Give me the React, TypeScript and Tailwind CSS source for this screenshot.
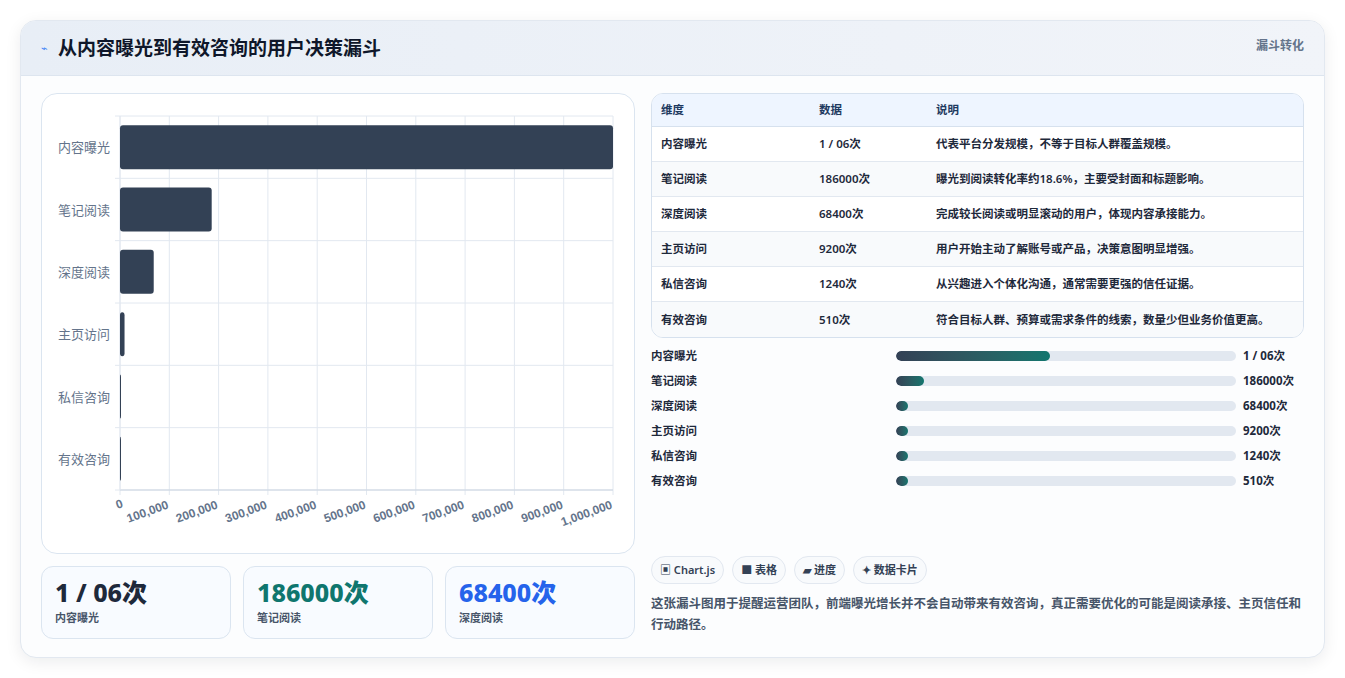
import React from "react";

const rows = [
  { n: "内容曝光", v: "1 / 06次", num: 1000000, d: "代表平台分发规模，不等于目标人群覆盖规模。", w: 154 },
  { n: "笔记阅读", v: "186000次", num: 186000, d: "曝光到阅读转化率约18.6%，主要受封面和标题影响。", w: 28 },
  { n: "深度阅读", v: "68400次", num: 68400, d: "完成较长阅读或明显滚动的用户，体现内容承接能力。", w: 12 },
  { n: "主页访问", v: "9200次", num: 9200, d: "用户开始主动了解账号或产品，决策意图明显增强。", w: 12 },
  { n: "私信咨询", v: "1240次", num: 1240, d: "从兴趣进入个体化沟通，通常需要更强的信任证据。", w: 12 },
  { n: "有效咨询", v: "510次", num: 510, d: "符合目标人群、预算或需求条件的线索，数量少但业务价值更高。", w: 12 },
];

function Chart() {
  const x0 = 78, x1 = 571, y0 = 22, y1 = 396;
  const rh = (y1 - y0) / 6;
  const ticks = Array.from({ length: 11 }, (_, i) => i);
  return (
    <svg width="591" height="458" className="block">
      {ticks.map((i) => {
        const x = x0 + ((x1 - x0) * i) / 10;
        return <line key={i} x1={x} y1={y0} x2={x} y2={y1 + 5} stroke="#e2e8f0" strokeWidth="1" />;
      })}
      {Array.from({ length: 7 }, (_, i) => (
        <line key={i} x1={x0 - 5} y1={y0 + rh * i} x2={x1} y2={y0 + rh * i} stroke="#e2e8f0" strokeWidth="1" />
      ))}
      <line x1={x0} y1={y1} x2={x1} y2={y1} stroke="#cbd5e1" />
      <line x1={x0} y1={y0} x2={x0} y2={y1} stroke="#e2e8f0" />
      {rows.map((r, i) => {
        const w = Math.max(1, ((x1 - x0) * r.num) / 1000000);
        const cy = y0 + rh * i + rh / 2;
        return (
          <g key={i}>
            <rect x={x0} y={cy - 22} width={w} height={44} rx="3" fill="#334155" />
            <text x={x0 - 10} y={cy + 5} textAnchor="end" fontSize="13" fill="#64748b" fontFamily="'Noto Sans CJK SC', sans-serif">{r.n}</text>
          </g>
        );
      })}
      {ticks.map((i) => {
        const x = x0 + ((x1 - x0) * i) / 10;
        const label = i === 0 ? "0" : i === 10 ? "1,000,000" : `${i}00,000`;
        return (
          <text key={i} x={x} y={y1 + 18} textAnchor="end" fontSize="12" fontWeight="bold" fill="#64748b" transform={`rotate(-20 ${x} ${y1 + 18})`} fontFamily="'Liberation Sans', Arial, sans-serif" dx={i === 0 ? 4 : 0}>{label}</text>
        );
      })}
    </svg>
  );
}

export default function App() {
  return (
    <div className="w-[1345px] h-[678px] bg-white p-5" style={{ fontFamily: "'Noto Sans', 'Noto Sans CJK SC', sans-serif" }}>
      <div className="h-[638px] rounded-2xl border border-[#e2e8f0] bg-[#fcfdfe] shadow-[0_4px_16px_rgba(15,23,42,0.08)] overflow-hidden">
        <div className="h-[55px] flex items-center justify-between px-5 bg-gradient-to-r from-[#e8eef6] to-[#f1f4f9] border-b border-[#dde5ef]">
          <div className="flex items-center gap-2.5">
            <span className="text-[#3b82f6] text-[11px]">⌁</span>
            <span className="text-[19px] font-bold text-[#0f172a]">从内容曝光到有效咨询的用户决策漏斗</span>
          </div>
          <span className="text-[12px] font-bold text-[#64748b] self-start mt-4">漏斗转化</span>
        </div>
        <div className="flex gap-4 px-5 pt-[17px]">
          <div className="w-[594px] flex flex-col gap-3">
            <div className="h-[461px] rounded-2xl border border-[#dbe5f0] bg-white overflow-hidden">
              <Chart />
            </div>
            <div className="flex gap-3">
              {[
                ["1 / 06次", "内容曝光", "text-[#1e293b]"],
                ["186000次", "笔记阅读", "text-[#0f766e]"],
                ["68400次", "深度阅读", "text-[#2563eb]"],
              ].map(([v, l, c]) => (
                <div key={l} className="flex-1 h-[73px] rounded-xl border border-[#dbe5f0] bg-[#f8fbff] px-[13px] pt-[9px]">
                  <div className={`text-[25px] font-extrabold leading-[32px] ${c}`}>{v}</div>
                  <div className="text-[11px] font-semibold text-[#475569] mt-0.5">{l}</div>
                </div>
              ))}
            </div>
          </div>
          <div className="flex-1 flex flex-col">
            <div className="rounded-xl border border-[#d6e1ee] overflow-hidden text-[11.5px] bg-white">
              <div className="flex h-[33px] items-center bg-[#eef5ff] font-bold text-[#1e3a5f] border-b border-[#d6e1ee]">
                <div className="w-[167px] pl-[9px]">维度</div>
                <div className="w-[117px]">数据</div>
                <div>说明</div>
              </div>
              {rows.map((r, i) => (
                <div key={i} className={`flex h-[35px] items-center font-semibold text-[#1e293b] ${i < 5 ? "border-b border-[#e2e8f0]" : ""} ${i % 2 ? "bg-[#f8fafc]" : "bg-white"}`}>
                  <div className="w-[167px] pl-[9px]">{r.n}</div>
                  <div className="w-[117px]">{r.v}</div>
                  <div>{r.d}</div>
                </div>
              ))}
            </div>
            <div className="mt-[9px] flex flex-col gap-[7px]">
              {rows.map((r, i) => (
                <div key={i} className="flex items-center h-[18px] text-[11.5px] font-semibold text-[#1e293b]">
                  <div className="w-[245px]">{r.n}</div>
                  <div className="w-[340px] h-[10px] rounded-full bg-[#e2e8f0] overflow-hidden">
                    <div className="h-full rounded-full bg-gradient-to-r from-[#334155] to-[#0f766e]" style={{ width: r.w }} />
                  </div>
                  <div className="ml-[7px] font-bold">{r.v}</div>
                </div>
              ))}
            </div>
            <div className="mt-[66px] flex gap-2 text-[11px] font-semibold text-[#334155]">
              {["▣ Chart.js", "■ 表格", "▰ 进度", "✦ 数据卡片"].map((t) => (
                <span key={t} className="h-[28px] px-2 rounded-full border border-[#e2e8f0] bg-[#f8fafc] flex items-center">{t}</span>
              ))}
            </div>
            <p className="mt-[9px] text-[12.5px] leading-[21px] font-semibold text-[#475569]">
              这张漏斗图用于提醒运营团队，前端曝光增长并不会自动带来有效咨询，真正需要优化的可能是阅读承接、主页信任和行动路径。
            </p>
          </div>
        </div>
      </div>
    </div>
  );
}
